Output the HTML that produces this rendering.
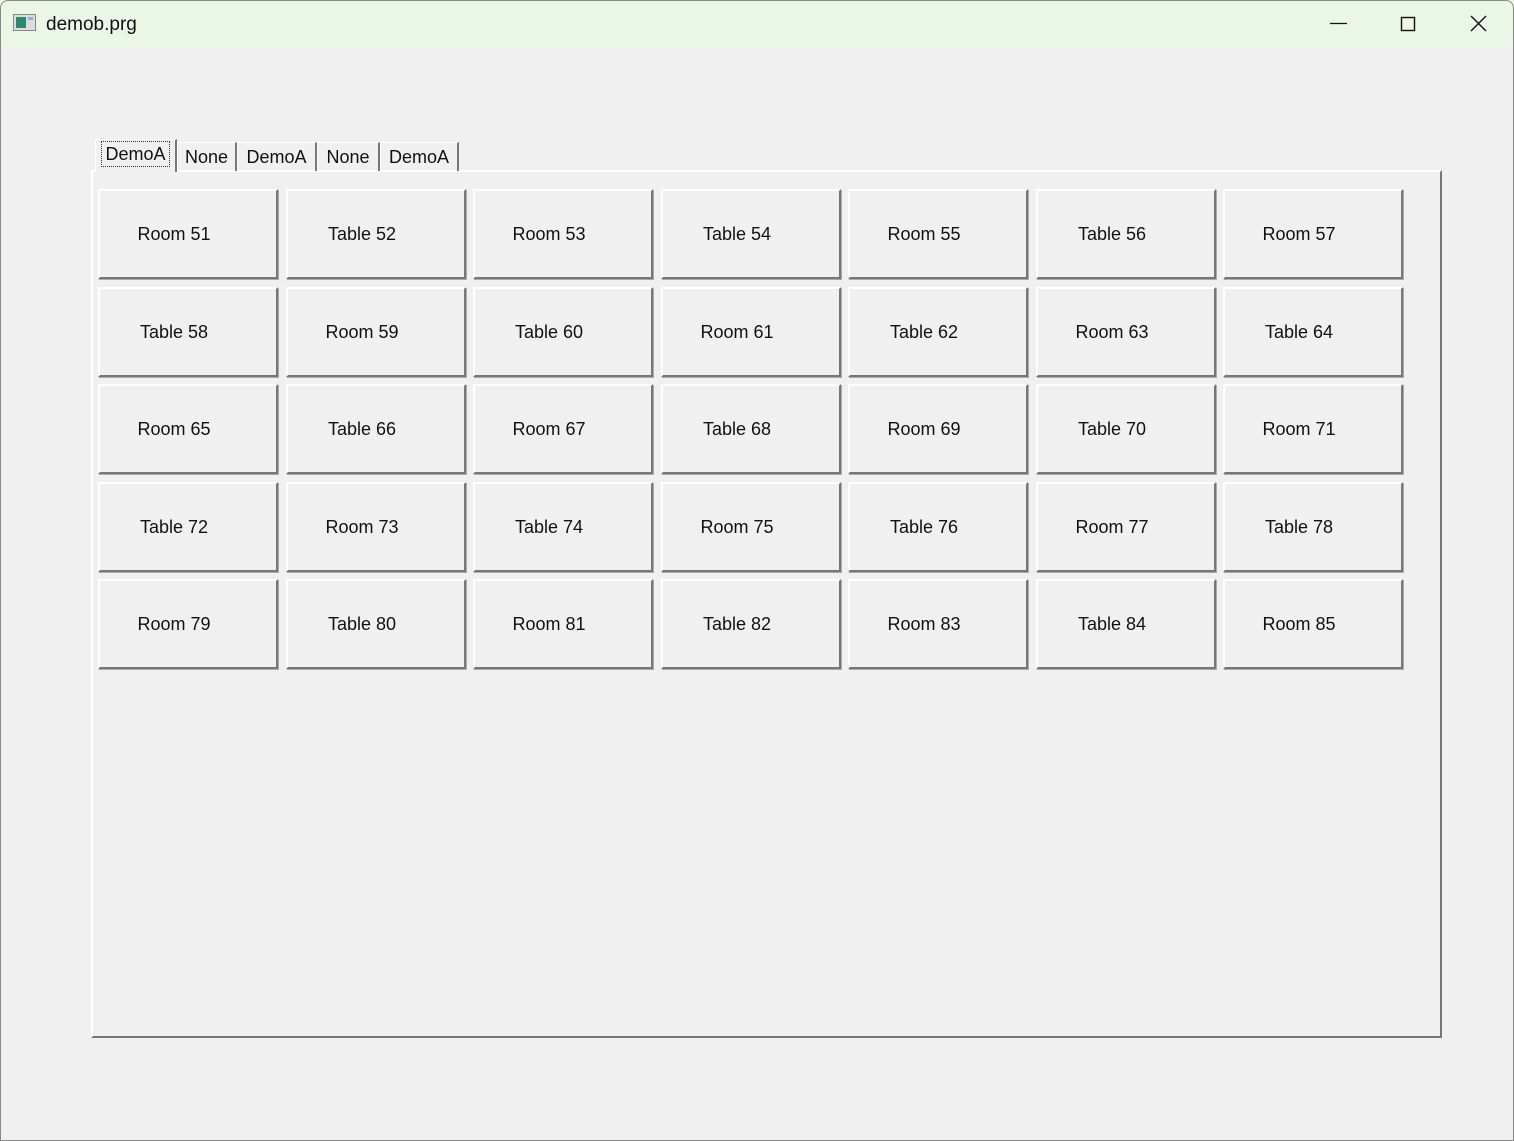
<!DOCTYPE html>
<html><head><style>
body{margin:0;width:1514px;height:1141px;background:#f0f0f0;font-family:"Liberation Sans",Arial,sans-serif;position:relative;overflow:hidden}
.title{position:absolute;left:0;top:0;width:1514px;height:47px;background:#eaf6e6}
.win{position:absolute;left:0;top:0;width:1512px;height:1139px;border:1px solid #888;border-radius:8px 8px 0 0;pointer-events:none}
.b{position:absolute;border-top:2px solid #fff;border-left:2px solid #fff;border-right:2px solid #777;border-bottom:2px solid #777;box-shadow:1px 1px 0 #aaa;font-size:18px;color:#111;display:flex;align-items:center;justify-content:center;box-sizing:border-box;width:180px;height:90px;padding-right:28px}
.tab{position:absolute;top:142px;height:29px;border-top:1px solid #fff;border-left:1px solid #fff;border-right:2px solid #777;box-sizing:border-box;font-size:18px;color:#111;text-align:center;line-height:28px}
.panel{position:absolute;left:91px;top:170px;width:1351px;height:868px;box-sizing:border-box;border-top:2px solid #fff;border-left:2px solid #fff;border-right:2px solid #777;border-bottom:2px solid #777}
</style></head><body>
<div class="title"></div>
<svg style="position:absolute;left:13px;top:14px" width="23" height="17"><rect x="0.5" y="0.5" width="22" height="16" fill="#ddd" stroke="#888"/><rect x="3" y="3" width="10" height="11" fill="#2a8a6a"/><rect x="15" y="3" width="5" height="3" fill="#9ad"/></svg>
<div style="position:absolute;left:46px;top:14px;font-size:19px;color:#111">demob.prg</div>
<svg style="position:absolute;left:1320px;top:10px" width="180" height="28"><line x1="10" y1="13.5" x2="27" y2="13.5" stroke="#111" stroke-width="1.2"/><rect x="81.5" y="7.5" width="13" height="13" fill="none" stroke="#111" stroke-width="1.4"/><path d="M151 6 L166 21 M166 6 L151 21" stroke="#111" stroke-width="1.4"/></svg>
<div class="panel"></div>
<div class="tab" style="left:95px;top:139px;width:82px;height:33px;background:#f0f0f0;z-index:2"><span style="border:1px dotted #333;padding:0 3px;display:inline-block;line-height:24px;margin-top:1px">DemoA</span></div>
<div class="tab" style="left:177px;width:60px">None</div>
<div class="tab" style="left:237px;width:80px">DemoA</div>
<div class="tab" style="left:317px;width:63px">None</div>
<div class="tab" style="left:380px;width:79px">DemoA</div>
<div class="b" style="left:98px;top:189px">Room 51</div><div class="b" style="left:286px;top:189px">Table 52</div><div class="b" style="left:473px;top:189px">Room 53</div><div class="b" style="left:661px;top:189px">Table 54</div><div class="b" style="left:848px;top:189px">Room 55</div><div class="b" style="left:1036px;top:189px">Table 56</div><div class="b" style="left:1223px;top:189px">Room 57</div>
<div class="b" style="left:98px;top:287px">Table 58</div><div class="b" style="left:286px;top:287px">Room 59</div><div class="b" style="left:473px;top:287px">Table 60</div><div class="b" style="left:661px;top:287px">Room 61</div><div class="b" style="left:848px;top:287px">Table 62</div><div class="b" style="left:1036px;top:287px">Room 63</div><div class="b" style="left:1223px;top:287px">Table 64</div>
<div class="b" style="left:98px;top:384px">Room 65</div><div class="b" style="left:286px;top:384px">Table 66</div><div class="b" style="left:473px;top:384px">Room 67</div><div class="b" style="left:661px;top:384px">Table 68</div><div class="b" style="left:848px;top:384px">Room 69</div><div class="b" style="left:1036px;top:384px">Table 70</div><div class="b" style="left:1223px;top:384px">Room 71</div>
<div class="b" style="left:98px;top:482px">Table 72</div><div class="b" style="left:286px;top:482px">Room 73</div><div class="b" style="left:473px;top:482px">Table 74</div><div class="b" style="left:661px;top:482px">Room 75</div><div class="b" style="left:848px;top:482px">Table 76</div><div class="b" style="left:1036px;top:482px">Room 77</div><div class="b" style="left:1223px;top:482px">Table 78</div>
<div class="b" style="left:98px;top:579px">Room 79</div><div class="b" style="left:286px;top:579px">Table 80</div><div class="b" style="left:473px;top:579px">Room 81</div><div class="b" style="left:661px;top:579px">Table 82</div><div class="b" style="left:848px;top:579px">Room 83</div><div class="b" style="left:1036px;top:579px">Table 84</div><div class="b" style="left:1223px;top:579px">Room 85</div>
<div class="win"></div>
</body></html>
